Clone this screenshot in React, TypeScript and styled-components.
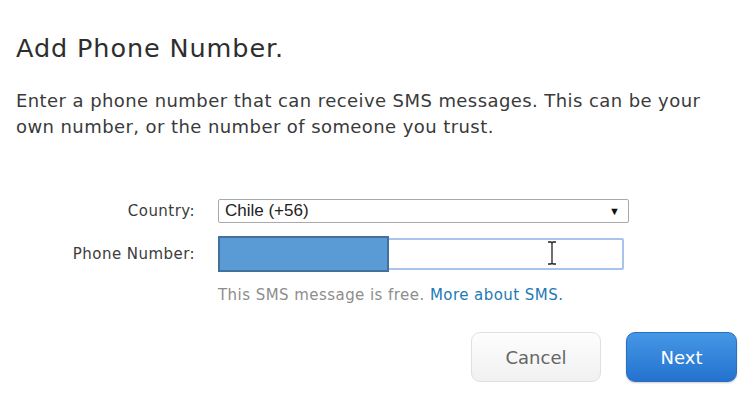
import styled, { createGlobalStyle } from "styled-components";

const GlobalStyle = createGlobalStyle`
  html, body {
    margin: 0;
    padding: 0;
    background: #fff;
  }
  body {
    font-family: "DejaVu Sans", "Liberation Sans", sans-serif;
    color: #333;
  }
`;

const Page = styled.div`
  width: 751px;
  height: 418px;
  box-sizing: border-box;
  padding: 33px 14px 0 16px;
  overflow: hidden;
`;

const Title = styled.h1`
  margin: 0;
  font-size: 25.5px;
  line-height: 30px;
  font-weight: normal;
  letter-spacing: 0.9px;
  color: #2e2e2e;
`;

const Intro = styled.p`
  margin: 25px 0 0;
  width: 710px;
  font-size: 18px;
  line-height: 26px;
  letter-spacing: 0.42px;
  color: #3a3a3a;
`;

const Form = styled.div`
  margin-top: 59px;
  display: grid;
  grid-template-columns: 179px 1fr;
  column-gap: 23px;
  row-gap: 15px;
  align-items: center;
`;

const Label = styled.label`
  text-align: right;
  font-size: 15px;
  color: #3c3c3c;
  letter-spacing: 0.45px;
`;

const SelectBox = styled.div`
  width: 411px;
  height: 24px;
  box-sizing: border-box;
  border: 1px solid #a9a9a9;
  border-radius: 2px;
  display: flex;
  align-items: center;
  justify-content: space-between;
  padding: 0 8px 0 6px;
  font-family: "Liberation Sans", Arial, sans-serif;
  font-size: 17px;
  color: #222;
`;

const Arrow = styled.span`
  font-size: 11px;
  color: #111;
`;

const InputWrap = styled.div`
  position: relative;
  width: 406px;
  height: 32px;
`;

const Input = styled.div`
  width: 100%;
  height: 100%;
  box-sizing: border-box;
  border: 2px solid #a8c3ee;
  border-radius: 2px;
  background: #fff;
`;

const Redaction = styled.div`
  position: absolute;
  left: 0;
  top: -2px;
  width: 171px;
  height: 36px;
  box-sizing: border-box;
  background: #5b9bd5;
  border: 2px solid #41719c;
`;

const Cursor = styled.svg`
  position: absolute;
  left: 329px;
  top: 3px;
`;

const Help = styled.div`
  grid-column: 2;
  margin-top: 1px;
  font-size: 15px;
  color: #8d8d8d;
  letter-spacing: 0.45px;
`;

const Link = styled.a`
  color: #2379b5;
  text-decoration: none;
`;

const Actions = styled.div`
  margin-top: 28px;
  display: flex;
  justify-content: flex-end;
  gap: 25px;
`;

const Button = styled.button<{ $primary?: boolean }>`
  height: 50px;
  width: ${(p) => (p.$primary ? "111px" : "130px")};
  border-radius: 9px;
  font-family: "DejaVu Sans", sans-serif;
  font-size: 18px;
  cursor: pointer;
  border: 1px solid ${(p) => (p.$primary ? "#2a6fbf" : "#e0e0e0")};
  color: ${(p) => (p.$primary ? "#fff" : "#666")};
  background: ${(p) =>
    p.$primary
      ? "linear-gradient(#4597e6, #2472cf)"
      : "linear-gradient(#fdfdfd, #f1f1f1)"};
  box-shadow: ${(p) => (p.$primary ? "0 1px 2px rgba(0,0,0,0.2)" : "none")};
`;

export default function App() {
  return (
    <>
      <GlobalStyle />
      <Page>
        <Title>Add Phone Number.</Title>
        <Intro>
          Enter a phone number that can receive SMS messages. This can be your
          own number, or the number of someone you trust.
        </Intro>
        <Form>
          <Label>Country:</Label>
          <SelectBox>
            <span>Chile (+56)</span>
            <Arrow>▼</Arrow>
          </SelectBox>
          <Label>Phone Number:</Label>
          <InputWrap>
            <Input />
            <Redaction />
            <Cursor width="10" height="24" viewBox="0 0 10 24">
              <path d="M1 1h3l1 1 1-1h3M5 2v20M1 23h3l1-1 1 1h3" fill="none" stroke="#222" strokeWidth="1.3" />
            </Cursor>
          </InputWrap>
          <Help>
            This SMS message is free. <Link href="#">More about SMS.</Link>
          </Help>
        </Form>
        <Actions>
          <Button>Cancel</Button>
          <Button $primary>Next</Button>
        </Actions>
      </Page>
    </>
  );
}
